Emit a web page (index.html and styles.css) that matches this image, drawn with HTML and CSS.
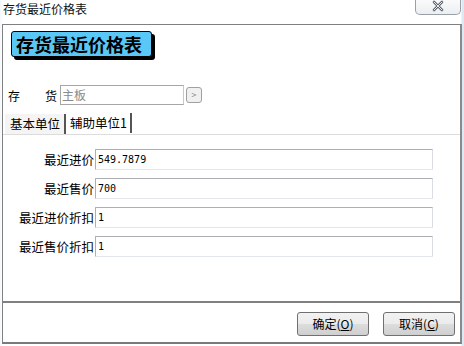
FILE: index.html
```html
<!DOCTYPE html>
<html>
<head>
<meta charset="utf-8">
<link rel="stylesheet" href="styles.css">
</head>
<body>
<div class="window">
  <div class="titlebar">
    <span class="title">存货最近价格表</span>
    <span class="close"><svg width="14" height="12" viewBox="0 0 14 12"><path d="M3 2 L11 10 M11 2 L3 10" stroke="#5f6670" stroke-width="2.6" stroke-linecap="round"/><path d="M3 2 L11 10 M11 2 L3 10" stroke="#e9ecf0" stroke-width="1" stroke-linecap="round"/></svg></span>
  </div>
  <div class="client">
    <div class="banner-wrap"><div class="banner">存货最近价格表</div></div>
    <div class="inv-row">
      <span class="inv-label">存</span><span class="inv-label2">货</span>
      <div class="inv-input">主板</div>
      <div class="inv-btn"><span>&gt;</span></div>
    </div>
    <div class="tabs">
      <div class="tab active">基本单位</div>
      <div class="tab">辅助单位1</div>
    </div>
    <div class="panel">
      <div class="field"><span class="flabel">最近进价</span><div class="finput">549.7879</div></div>
      <div class="field"><span class="flabel">最近售价</span><div class="finput">700</div></div>
      <div class="field"><span class="flabel">最近进价折扣</span><div class="finput">1</div></div>
      <div class="field"><span class="flabel">最近售价折扣</span><div class="finput">1</div></div>
    </div>
    <div class="footer">
      <div class="btn">确定(<u>O</u>)</div>
      <div class="btn">取消(<u>C</u>)</div>
    </div>
  </div>
</div>
</body>
</html>
```
FILE: styles.css
```css
* { box-sizing: border-box; }
html, body { margin: 0; padding: 0; background: #fff; }
body {
  width: 464px; height: 346px; overflow: hidden;
  font-family: "Noto Sans CJK SC", "Liberation Sans", sans-serif;
  font-size: 12px; color: #000;
}
.window {
  width: 464px; height: 346px;
  background: linear-gradient(90deg, #f4f8fb 0, #fff 3px, #fff 461px, #dde9f2 462px);
  display: flex; flex-direction: column;
}
.titlebar {
  height: 24px; display: flex; justify-content: space-between; align-items: flex-start;
  padding-left: 3px;
}
.title { font-size: 12px; line-height: 14px; margin-top: 2px; color: #111; }
.close {
  width: 46px; height: 16px; margin-right: 3px; margin-top: -1px;
  border: 1px solid #9aa0a8; border-top: none; border-radius: 0 0 5px 5px;
  background: linear-gradient(#fbfbfc, #eceef1);
  display: flex; justify-content: center; align-items: center;
}
.close svg { display: block; margin-top: -1px; }
.client {
  margin: 0 2px 2px 2px; flex: 1;
  border: 1px solid #808080; border-right: 2px solid #8a8a8a; border-bottom: 2px solid #7a7a7a;
  background: #fff;
  display: flex; flex-direction: column;
}
.banner-wrap { padding: 6px 0 0 8px; height: 60px; }
.banner {
  display: inline-block; width: 141px; height: 26px;
  background: #5ac8f6; border: 1px solid #000; border-radius: 3px;
  box-shadow: 3px 3px 0 #000;
  font-size: 18px; font-weight: bold; line-height: 24px; padding-left: 4px;
}
.inv-row { display: flex; align-items: center; height: 20px; padding-left: 5px; }
.inv-label { width: 37px; }
.inv-label2 { width: 15px; }
.inv-input {
  width: 124px; height: 20px; border: 1px solid #a6a6a6; border-right-color: #c8c8c8;
  color: #8a8a8a; line-height: 18px; padding-left: 1px;
}
.inv-btn {
  width: 16px; height: 16px; margin-left: 2px; border: 1px solid #a0a0a0; border-radius: 3px;
  background: #f0f0f0; font-size: 9px; color: #888; text-align: center; line-height: 14px;
}
.tabs { display: flex; margin-top: 8px; height: 21px; padding-left: 1px; }
.tab {
  height: 20px; padding: 0 3px; line-height: 19px; font-size: 12.5px;
  border-right: 2px solid #555; border-left: 1px solid #fff;
  background: #fff;
}
.tab.active { background: #f4f4f4; padding: 0 4px 0 5px; margin-top: 1px; }
.panel {
  border-top: 1px solid #dcdcdc; border-bottom: 2px solid #808080;
  height: 169px; padding: 14px 0 0 0;
  display: flex; flex-direction: column; gap: 8px;
}
.field { display: flex; align-items: center; height: 21px; }
.flabel { width: 92px; text-align: right; padding-right: 1px; font-size: 12.5px; }
.finput {
  width: 338px; height: 21px; border: 1px solid #aeaeb4; border-bottom-color: #e3e6ea;
  border-right-color: #dadde3; border-radius: 1px;
  font-family: "DejaVu Sans Mono", "Liberation Mono", monospace; font-size: 10px; line-height: 19px;
  padding-left: 2px; color: #000;
}
.footer { display: flex; justify-content: flex-end; gap: 14px; padding: 9px 5px 0 0; }
.btn {
  width: 72px; height: 24px; border: 1px solid #707070; border-radius: 3px;
  background: linear-gradient(#f2f2f2 0, #ebebeb 50%, #dddddd 51%, #cfcfcf 100%);
  text-align: center; line-height: 22px; font-size: 12px;
}
.btn u { text-decoration: underline; }
```
